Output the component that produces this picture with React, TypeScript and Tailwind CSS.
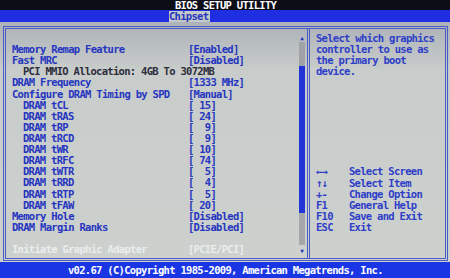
import React from 'react';

const ROWS: { label: string; value: string; indent?: boolean; tone?: 'dim' | 'hi' }[] = [
  { label: '', value: '' },
  { label: 'Memory Remap Feature', value: '[Enabled]' },
  { label: 'Fast MRC', value: '[Disabled]' },
  { label: 'PCI MMIO Allocation: 4GB To 3072MB', value: '', indent: true, tone: 'dim' },
  { label: 'DRAM Frequency', value: '[1333 MHz]' },
  { label: 'Configure DRAM Timing by SPD', value: '[Manual]' },
  { label: 'DRAM tCL', value: '[ 15]', indent: true },
  { label: 'DRAM tRAS', value: '[ 24]', indent: true },
  { label: 'DRAM tRP', value: '[  9]', indent: true },
  { label: 'DRAM tRCD', value: '[  9]', indent: true },
  { label: 'DRAM tWR', value: '[ 10]', indent: true },
  { label: 'DRAM tRFC', value: '[ 74]', indent: true },
  { label: 'DRAM tWTR', value: '[  5]', indent: true },
  { label: 'DRAM tRRD', value: '[  4]', indent: true },
  { label: 'DRAM tRTP', value: '[  5]', indent: true },
  { label: 'DRAM tFAW', value: '[ 20]', indent: true },
  { label: 'Memory Hole', value: '[Disabled]' },
  { label: 'DRAM Margin Ranks', value: '[Disabled]' },
  { label: '', value: '' },
  { label: 'Initiate Graphic Adapter', value: '[PCIE/PCI]', tone: 'hi' },
];

const HELP = ['Select which graphics', 'controller to use as', 'the primary boot', 'device.'];

const KEYS = [
  ['\u2190\u2192', 'Select Screen'],
  ['\u2191\u2193', 'Select Item'],
  ['+-', 'Change Option'],
  ['F1', 'General Help'],
  ['F10', 'Save and Exit'],
  ['ESC', 'Exit'],
];

function Row({ label, value, indent, tone }: (typeof ROWS)[number]) {
  const color =
    tone === 'dim' ? 'text-[#2c2e3c]' : tone === 'hi' ? 'text-[#e9eded]' : 'text-[#2535c0]';
  return (
    <div className={`flex h-[11.12px] leading-[11.12px] whitespace-pre ${color}`}>
      <div className={`w-[176px] shrink-0 ${indent ? 'pl-[11px]' : ''}`}>{label}</div>
      <div>{value}</div>
    </div>
  );
}

export default function App() {
  return (
    <div
      className="w-[450px] h-[278px] overflow-hidden font-bold text-[10.5px] tracking-[-0.7px] bg-[#1a36e4]"
      style={{ fontFamily: '"DejaVu Sans Mono", "Liberation Mono", monospace' }}
    >
      <div className="h-[10px] bg-[#0d0d18] text-white leading-[10px] pl-[175px] whitespace-pre">
        BIOS SETUP UTILITY
      </div>
      <div className="h-[12px] bg-[#1e2ee0] pl-[169px] pt-[1px]">
        <div className="w-[41px] h-[11px] bg-[#c4c8c8] text-[#2535c0] leading-[11px]">Chipset</div>
      </div>

      <div className="h-[240px] bg-gradient-to-b from-[#adb2b8] via-[#c8ccca] via-[20%] to-[#cdd1ce] pt-[4px] pl-[3px]">
        <div className="w-[445px] h-[235px] border-[3px] border-double border-[#4a5ac8] flex">
          <div className="w-[301px] flex">
            <div className="flex-1 pt-[4px] pl-[6px]">
              {ROWS.map((r, i) => (
                <Row key={i} {...r} />
              ))}
            </div>
            <div className="w-[6px] mr-[2px] mt-[4px] mb-[2px] flex flex-col">
              <div className="h-[9px] flex items-center justify-center text-[6px] text-[#2535c0] tracking-normal">
                ▲
              </div>
              <div className="h-[24px] bg-[#9fa3a8]" />
              <div className="h-[147px] bg-[#2233d8]" />
              <div className="h-[32px] bg-[#a3a7aa]" />
              <div className="flex-1 flex items-center justify-center text-[6px] text-[#2535c0] tracking-normal">
                ▼
              </div>
            </div>
          </div>
          <div className="flex-1 border-l-[3px] border-double border-[#4a5ac8] pt-[4px] pl-[6px] text-[#2e3ec8] whitespace-pre">
            {HELP.map((t) => (
              <div key={t} className="h-[11.12px] leading-[11.12px]">
                {t}
              </div>
            ))}
            <div className="h-[88.96px]" />
            {KEYS.map(([k, d]) => (
              <div key={k} className="flex h-[11.12px] leading-[11.12px]">
                <div className="w-[33px] shrink-0">{k}</div>
                <div>{d}</div>
              </div>
            ))}
          </div>
        </div>
      </div>

      <div className="h-[16px] leading-[16px] pl-[68px] text-white whitespace-pre">
        v02.67 (C)Copyright 1985-2009, American Megatrends, Inc.
      </div>
    </div>
  );
}
